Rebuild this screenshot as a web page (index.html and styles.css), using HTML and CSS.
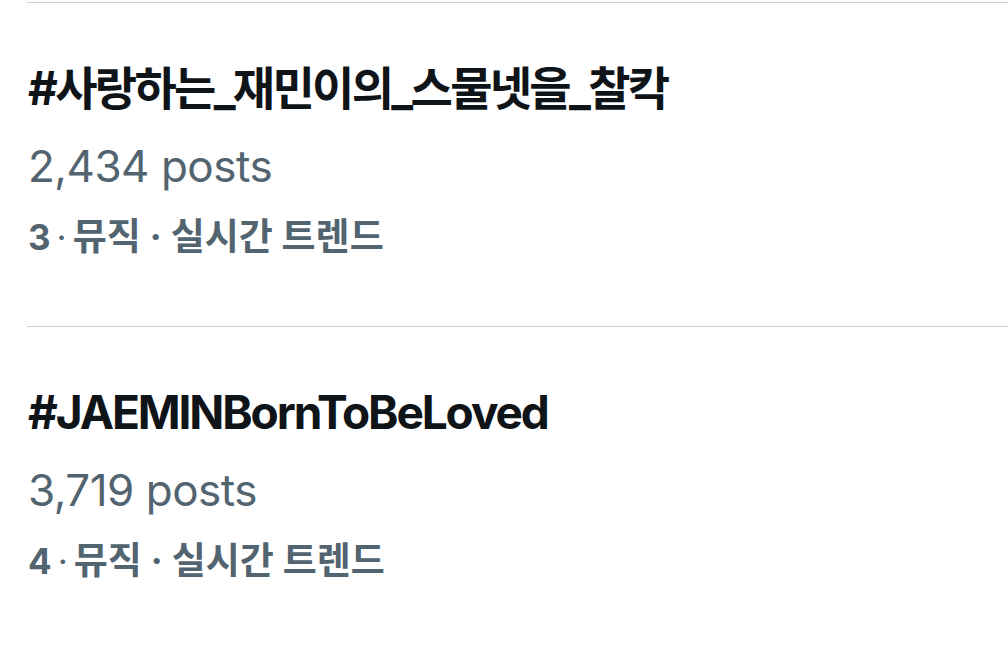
FILE: index.html
```html
<!DOCTYPE html>
<html lang="ko">
<head>
<meta charset="utf-8">
<link rel="stylesheet" href="styles.css">
</head>
<body>
<div class="trends">
  <div class="trend">
    <div class="title title-ko">#사랑하는_재민이의_스물넷을_찰칵</div>
    <div class="posts">2,434 posts</div>
    <div class="meta"><span class="num">3</span><span class="dot-thin">·</span>뮤직<span class="dot"> · </span>실시간 트렌드</div>
  </div>
  <div class="trend">
    <div class="title">#JAEMINBornToBeLoved</div>
    <div class="posts">3,719 posts</div>
    <div class="meta"><span class="num">4</span><span class="dot-thin">·</span>뮤직<span class="dot"> · </span>실시간 트렌드</div>
  </div>
</div>
</body>
</html>
```

FILE: styles.css
```css
html, body {
  margin: 0;
  padding: 0;
  background: #ffffff;
}
body {
  width: 1008px;
  height: 648px;
  overflow: hidden;
  font-family: Inter, "Noto Sans CJK KR", sans-serif;
}
.trends {
  padding-top: 2px;
}
.trend {
  border-top: 1px solid #cfcfcf;
  margin-left: 27px;
  padding: 57px 0 67px 1px;
}
.title {
  font-size: 46px;
  line-height: 56px;
  font-weight: 700;
  color: #0f1419;
  letter-spacing: -2.1px;
  white-space: nowrap;
}
.title-ko {
  letter-spacing: -2.7px;
}
.posts {
  margin-top: 24px;
  font-size: 44px;
  line-height: 52px;
  font-weight: 400;
  color: #536471;
  letter-spacing: -0.5px;
}
.meta {
  margin-top: 23px;
  font-size: 37px;
  line-height: 44px;
  font-weight: 700;
  color: #536471;
  white-space: pre;
}
.num {
  font-size: 35px;
}
.dot-thin {
  font-size: 35px;
  font-weight: 400;
  padding: 0 6px;
}
.dot {
  font-weight: 700;
}
```
